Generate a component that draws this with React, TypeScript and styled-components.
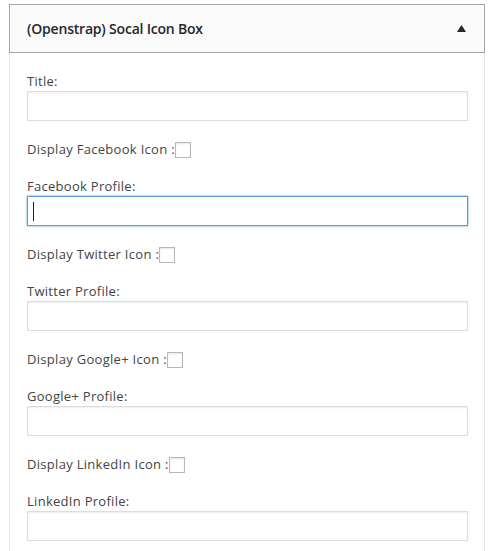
import React from "react";
import styled, { createGlobalStyle } from "styled-components";

const Global = createGlobalStyle`
  html, body { margin: 0; padding: 0; background: #ffffff; }
  body { font-family: "Open Sans", "Noto Sans", sans-serif; }
  * { box-sizing: border-box; }
`;

const Page = styled.div`
  padding: 4px 0 0 9px;
  width: 493px;
  height: 551px;
  overflow: hidden;
`;

const Widget = styled.div`
  width: 476px;
`;

const Header = styled.div`
  height: 49px;
  background: #fafafa;
  border: 1px solid #a0a5aa;
  display: flex;
  align-items: center;
  justify-content: space-between;
  padding: 0 18px 0 17px;
`;

const HeaderTitle = styled.h3`
  margin: 0;
  font-size: 14px;
  font-weight: 600;
  letter-spacing: -0.2px;
  color: #23282d;
  line-height: 18px;
`;

const Body = styled.div`
  border-left: 1px solid #e5e5e5;
  border-right: 1px solid #e5e5e5;
  padding: 19px 16px 40px 17px;
  display: flex;
  flex-direction: column;
  gap: 19px;
`;

const Field = styled.div`
  display: flex;
  flex-direction: column;
  gap: 1px;
`;

const Label = styled.label`
  font-size: 13px;
  line-height: 18px;
  letter-spacing: 0.28px;
  color: #444444;
`;

const InputWrap = styled.div<{ $caret?: boolean }>`
  position: relative;
  &::after {
    content: "";
    display: ${(p) => (p.$caret ? "block" : "none")};
    position: absolute;
    left: 6px;
    top: 6px;
    width: 1px;
    height: 19px;
    background: #1e1e1e;
  }
`;

const TextInput = styled.input<{ $focused?: boolean }>`
  display: block;
  width: 100%;
  height: 30px;
  margin: 0;
  padding: 3px 5px;
  font-family: inherit;
  font-size: 14px;
  color: #32373c;
  background: #ffffff;
  outline: none;
  border: 1px solid ${(p) => (p.$focused ? "#5b9dd9" : "#dddddd")};
  box-shadow: ${(p) =>
    p.$focused
      ? "0 0 2px rgba(30, 140, 190, 0.8)"
      : "inset 0 1px 2px rgba(0, 0, 0, 0.07)"};
  border-radius: 0;
`;

const CheckRow = styled.div`
  display: flex;
  align-items: center;
  height: 18px;
  font-size: 13px;
  line-height: 18px;
  letter-spacing: 0.3px;
  color: #444444;
`;

const CheckBox = styled.span`
  display: inline-block;
  width: 16px;
  height: 16px;
  margin-top: 2px;
  border: 1px solid #b4b9be;
  background: #ffffff;
  box-shadow: inset 0 1px 2px rgba(0, 0, 0, 0.1);
`;

const Arrow = () => (
  <svg width="9" height="7" viewBox="0 0 9 7">
    <path d="M4.5 0 L9 7 L0 7 Z" fill="#23282d" />
  </svg>
);

const networks = ["Facebook", "Twitter", "Google+", "LinkedIn"];

export default function App() {
  return (
    <>
      <Global />
      <Page>
        <Widget>
          <Header>
            <HeaderTitle>(Openstrap) Socal Icon Box</HeaderTitle>
            <Arrow />
          </Header>
          <Body>
            <Field>
              <Label>Title:</Label>
              <InputWrap>
                <TextInput type="text" />
              </InputWrap>
            </Field>
            {networks.map((n, i) => (
              <React.Fragment key={n}>
                <CheckRow>
                  Display {n} Icon :<CheckBox />
                </CheckRow>
                <Field>
                  <Label>{n} Profile:</Label>
                  <InputWrap $caret={i === 0}>
                    <TextInput type="text" $focused={i === 0} />
                  </InputWrap>
                </Field>
              </React.Fragment>
            ))}
          </Body>
        </Widget>
      </Page>
    </>
  );
}
